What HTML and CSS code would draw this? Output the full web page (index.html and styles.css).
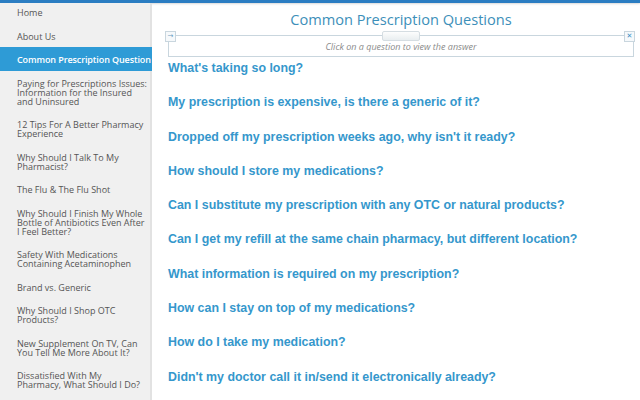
FILE: index.html
```html
<!DOCTYPE html>
<html lang="en">
<head>
    <meta charset="UTF-8">
    <meta name="viewport" content="width=device-width, initial-scale=1.0">
    <title>Common Prescription Questions</title>
    <link rel="stylesheet" href="styles.css">
</head>
<body>
    <div class="topbar"></div>
    <div class="page">
        <ul class="side-nav">
            <li>Home</li>
            <li>About Us</li>
            <li class="active">Common Prescription Question</li>
            <li>Paying for Prescriptions Issues: Information for the Insured and Uninsured</li>
            <li>12 Tips For A Better Pharmacy Experience</li>
            <li>Why Should I Talk To My Pharmacist?</li>
            <li>The Flu &amp; The Flu Shot</li>
            <li>Why Should I Finish My Whole Bottle of Antibiotics Even After I Feel Better?</li>
            <li>Safety With Medications Containing Acetaminophen</li>
            <li>Brand vs. Generic</li>
            <li>Why Should I Shop OTC Products?</li>
            <li>New Supplement On TV, Can You Tell Me More About It?</li>
            <li>Dissatisfied With My Pharmacy, What Should I Do?</li>
        </ul>

        <div class="main">
            <h1 class="title">Common Prescription Questions</h1>

            <div class="hint-box">
                <span class="hint-btn hint-pin">&#8594;</span>
                <span class="hint-handle"></span>
                <span class="hint-btn hint-close">&#10005;</span>
                <p class="hint-text">Click on a question to view the answer</p>
            </div>

            <ul class="questions">
                <li>What's taking so long?</li>
                <li>My prescription is expensive, is there a generic of it?</li>
                <li>Dropped off my prescription weeks ago, why isn't it ready?</li>
                <li>How should I store my medications?</li>
                <li>Can I substitute my prescription with any OTC or natural products?</li>
                <li>Can I get my refill at the same chain pharmacy, but different location?</li>
                <li>What information is required on my prescription?</li>
                <li>How can I stay on top of my medications?</li>
                <li>How do I take my medication?</li>
                <li>Didn't my doctor call it in/send it electronically already?</li>
            </ul>
        </div>
    </div>
</body>
</html>
```

FILE: styles.css
```css
body {
    margin: 0;
    height: 400px;
    overflow: hidden;
    background: #fff;
}
.topbar {
    height: 3px;
    background-color: #2b7dc2;
    box-shadow: 0 1px 2px rgba(0,0,0,0.15);
}
.page {
    display: flex;
    height: 397px;
}

/* left menu */
.side-nav {
    list-style: none;
    margin: 0;
    padding: 0;
    width: 150px;
    flex-shrink: 0;
    background-color: #f0f0f0;
    border-right: 2px solid #e2e2e2;
    font-family: 'Open Sans', sans-serif;
    font-size: 9px;
    line-height: 9px;
    color: #555;
}
.side-nav li {
    padding: 5px 2px 9.5px 17px;
}
.side-nav li.active {
    background-color: #2e9bd6;
    color: #fff;
    font-weight: 600;
    letter-spacing: -0.1px;
    margin: -3px -2px 2.5px 0;
    padding-top: 8px;
    padding-bottom: 7px;
    white-space: nowrap;
    overflow: hidden;
}

/* main content */
.main {
    flex: 1;
    padding: 0 6px 0 16px;
}
.title {
    margin: 7px 0 0;
    text-align: center;
    font-family: 'Open Sans', sans-serif;
    font-weight: 400;
    font-size: 14.6px;
    line-height: 18px;
    color: #3d8fb9;
}
.hint-box {
    position: relative;
    margin: 7px 0 0 0;
    height: 20px;
    border: 1px solid #c9d6de;
}
.hint-btn {
    position: absolute;
    top: -5px;
    width: 9px;
    height: 9px;
    border: 1px solid #c9d6de;
    background: #f6f9fb;
    font-family: 'DejaVu Sans', sans-serif;
    font-size: 7px;
    line-height: 9px;
    text-align: center;
    color: #6a9cc0;
}
.hint-pin {
    left: -4px;
}
.hint-close {
    right: -2px;
    color: #3d8fc6;
    font-weight: bold;
}
.hint-handle {
    position: absolute;
    top: -5px;
    left: 213px;
    width: 36px;
    height: 8px;
    border: 1px solid #d5dde2;
    border-radius: 2px;
    background: linear-gradient(#fdfdfd, #e9eef0);
}
.hint-text {
    margin: 5px 0 0;
    text-align: center;
    font-family: 'Open Sans', sans-serif;
    font-style: italic;
    font-size: 9px;
    line-height: 11px;
    color: #8a8a8a;
}
.questions {
    list-style: none;
    margin: 3px 0 0;
    padding: 0;
    font-family: 'Liberation Sans', Arial, sans-serif;
    font-weight: bold;
    font-size: 12.4px;
    color: #3597cc;
}
.questions li {
    height: 34.3px;
    line-height: 16px;
}
```
